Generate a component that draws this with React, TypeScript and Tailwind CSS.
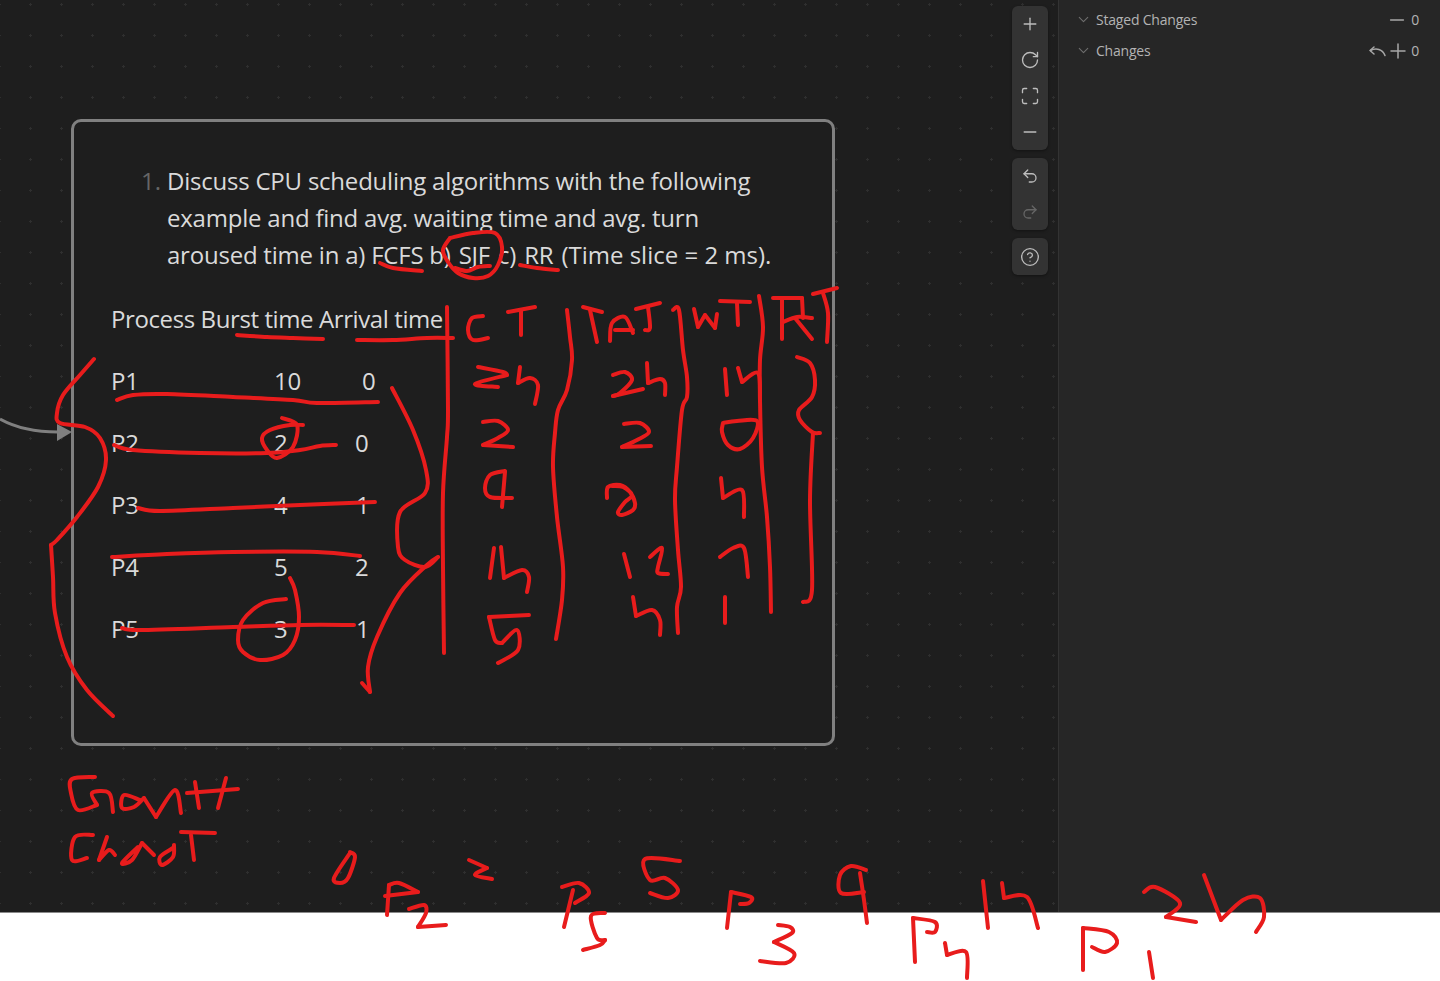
import { Plus, RotateCw, Maximize, Minus, Undo2, Redo2, CircleHelp, ChevronDown } from "lucide-react";

type Pt = [number, number];
const strokes: Pt[][] = [
  // question annotations
  [[380,263],[393,268],[422,271]],
  [[450,238],[473,233],[495,233],[502,247],[498,265],[488,276],[473,278],[458,273],[448,262],[443,250],[450,238]],
  [[455,268],[467,271],[478,267],[490,266]],
  [[520,265],[537,268],[558,270]],
  [[237,335],[267,337],[293,338],[323,339]],
  [[357,340],[393,340],[427,338],[453,338]],
  // column rules
  [[447,307],[448,410],[447,437],[443,493],[443,567],[444,653]],
  [[567,310],[570,337],[572,360],[567,390],[558,410],[555,433],[553,467],[557,517],[563,567],[562,600],[556,639]],
  [[673,310],[679,310],[683,350],[687,377],[687,397],[682,410],[677,467],[675,500],[678,550],[681,587],[677,607],[678,633]],
  [[759,296],[763,327],[760,360],[760,400],[762,467],[767,517],[770,567],[771,612]],
  // C T
  [[483,316],[472,318],[468,330],[473,340],[488,338]],
  [[508,312],[535,307]],
  [[521,310],[521,335]],
  // TAJ
  [[583,307],[602,312]],
  [[590,310],[597,342]],
  [[610,341],[612,323],[625,317],[633,333]],
  [[615,330],[633,330]],
  [[636,309],[660,303]],
  [[648,307],[650,328],[645,330]],
  // wT
  [[694,309],[698,327]],
  [[698,327],[705,315]],
  [[705,315],[715,328]],
  [[715,328],[717,314]],
  [[720,301],[750,302]],
  [[737,303],[738,325]],
  // RT
  [[773,298],[802,298]],
  [[782,300],[782,339]],
  [[802,298],[803,318]],
  [[783,322],[797,317],[812,318]],
  [[795,318],[812,339]],
  [[813,294],[837,288]],
  [[823,293],[828,313],[827,342]],
  // row 1
  [[478,367],[503,372],[507,375]],
  [[507,375],[475,384],[498,387]],
  [[520,367],[518,383]],
  [[518,383],[530,378],[538,385],[535,404]],
  [[613,375],[625,372],[632,380],[620,393],[613,396]],
  [[613,396],[643,389]],
  [[647,363],[648,383]],
  [[648,383],[660,379],[665,383],[665,395]],
  [[725,369],[727,395]],
  [[738,368],[742,382]],
  [[742,382],[758,373],[760,400]],
  [[797,357],[810,363],[815,380],[812,397],[799,410],[800,420],[812,432],[820,433]],
  [[813,433],[810,500],[812,590],[803,602]],
  // row 2
  [[483,422],[498,421],[508,430],[498,438],[483,445]],
  [[483,445],[513,447]],
  [[622,447],[651,446]],
  [[624,424],[640,423],[649,432],[637,440],[622,447]],
  [[723,423],[737,421],[757,421],[753,438],[740,449],[728,445],[722,432],[723,423]],
  // row 3
  [[505,471],[490,475],[485,488],[490,497],[512,498]],
  [[505,472],[502,507]],
  [[607,498],[608,487],[620,485],[630,492],[635,503],[633,510],[622,515],[618,512],[625,502],[632,495],[623,487],[612,486]],
  [[721,478],[723,498]],
  [[723,498],[742,490],[744,517]],
  // row 4
  [[494,548],[490,578]],
  [[501,547],[504,578]],
  [[504,578],[522,570],[529,577],[527,592]],
  [[624,554],[630,577]],
  [[650,557],[662,548],[658,567],[658,573],[668,574]],
  [[720,557],[733,548],[744,548],[748,577]],
  // row 5
  [[529,615],[489,617]],
  [[489,617],[495,640],[502,643]],
  [[502,643],[517,630],[518,650],[498,663]],
  [[633,597],[636,616]],
  [[636,616],[652,610],[660,620],[660,635]],
  [[725,597],[725,623]],
  // left side
  [[94,359],[80,375],[63,395],[57,413],[60,423],[85,427],[100,438],[106,460],[98,487],[77,517],[57,540],[51,545]],
  [[51,545],[53,577],[55,613],[67,657],[87,690],[113,716]],
  [[117,400],[133,395],[167,394],[233,397],[293,400],[317,403],[378,402]],
  [[114,445],[133,450],[200,453],[267,453],[300,450],[320,446],[336,445]],
  [[282,418],[297,425],[293,447],[277,458],[267,450],[262,438],[270,430],[290,425],[303,425]],
  [[138,508],[160,511],[233,508],[300,505],[375,502]],
  [[112,557],[167,554],[233,552],[317,552],[360,556]],
  [[122,628],[140,630],[233,627],[300,625],[354,625]],
  [[286,599],[263,603],[243,620],[238,640],[243,652],[260,660],[283,655],[295,640],[299,617],[295,590],[290,578]],
  [[392,388],[413,430],[426,470],[425,493],[400,512],[398,547],[405,560],[425,567],[438,557]],
  [[438,557],[427,565],[400,593],[377,637],[368,667],[370,692]],
  [[370,692],[362,683]],
  // Gantt
  [[95,777],[72,779],[71,793],[78,810],[97,805]],
  [[97,805],[92,793],[109,793],[113,812]],
  [[140,800],[124,795],[122,808],[134,807],[144,798]],
  [[144,798],[156,817]],
  [[156,817],[175,790],[181,813]],
  [[195,782],[199,808]],
  [[226,778],[218,808]],
  [[187,793],[238,789]],
  // Chart
  [[93,835],[75,837],[72,860],[87,858]],
  [[107,837],[99,860]],
  [[99,860],[109,850],[115,855]],
  [[138,847],[122,863],[132,860],[142,843]],
  [[142,843],[154,855]],
  [[173,848],[160,857],[162,865],[173,857],[174,845]],
  [[181,832],[215,833]],
  [[191,835],[194,860]],
  // timeline
  [[350,853],[334,878],[340,883],[348,878],[355,857],[350,852]],
  [[387,915],[389,885]],
  [[389,885],[399,883],[418,892]],
  [[418,892],[385,896]],
  [[409,909],[424,905],[426,913],[418,927]],
  [[418,927],[446,925]],
  [[469,860],[487,868]],
  [[487,868],[475,875],[492,879]],
  [[562,887],[579,883],[589,893],[575,903]],
  [[573,890],[564,927]],
  [[605,913],[591,916],[597,938],[605,940]],
  [[605,940],[600,945],[583,950]],
  [[680,861],[645,859],[650,880],[665,878],[678,890],[668,898],[650,893]],
  [[727,928],[731,892]],
  [[731,892],[751,897],[749,903],[740,904]],
  [[778,925],[790,927],[792,933],[774,942]],
  [[774,942],[794,953],[786,963],[760,961]],
  [[866,870],[851,866],[840,875],[841,893],[864,892]],
  [[860,873],[864,900],[867,923]],
  [[915,962],[913,918]],
  [[913,918],[935,922],[935,932],[927,932]],
  [[945,943],[947,955]],
  [[947,955],[966,952],[967,978]],
  [[983,881],[988,928]],
  [[1002,883],[1004,898]],
  [[1004,898],[1027,897],[1038,928]],
  [[1083,970],[1083,928]],
  [[1083,928],[1109,932],[1117,943],[1105,952],[1092,947]],
  [[1149,952],[1153,978]],
  [[1144,892],[1155,887],[1180,903],[1166,917]],
  [[1166,917],[1196,922]],
  [[1204,875],[1221,920]],
  [[1221,920],[1243,900],[1260,898],[1264,917],[1256,932]],
];

function toPath(p: Pt[]): string {
  let d = `M${p[0][0]} ${p[0][1]}`;
  for (let i = 0; i < p.length - 1; i++) {
    const a = p[Math.max(i - 1, 0)];
    const b = p[i];
    const c = p[i + 1];
    const e = p[Math.min(i + 2, p.length - 1)];
    d += `C${b[0] + (c[0] - a[0]) / 6} ${b[1] + (c[1] - a[1]) / 6} ${c[0] - (e[0] - b[0]) / 6} ${c[1] - (e[1] - b[1]) / 6} ${c[0]} ${c[1]}`;
  }
  return d;
}

const rows: { name: string; burst: string; arrive: string; col: string }[] = [
  { name: "P1", burst: "10", arrive: "0", col: "w-[88px]" },
  { name: "P2", burst: "2", arrive: "0", col: "w-[81px]" },
  { name: "P3", burst: "4", arrive: "1", col: "w-[82px]" },
  { name: "P4", burst: "5", arrive: "2", col: "w-[81px]" },
  { name: "P5", burst: "3", arrive: "1", col: "w-[82px]" },
];

function Ctl({ children }: { children: React.ReactNode }) {
  return <div className="flex h-9 w-9 items-center justify-center">{children}</div>;
}

function Group({ children }: { children: React.ReactNode }) {
  return (
    <div className="flex flex-col rounded-md bg-[#333333] shadow-[0_1px_3px_rgba(0,0,0,0.4)] text-[#bdbdbd]">
      {children}
    </div>
  );
}

function SideRow({ label, children }: { label: string; children: React.ReactNode }) {
  return (
    <div className="flex h-[31px] items-center pl-[16px] pr-[21px] text-[14px] tracking-[-0.2px] text-[#b3b3b3]">
      <ChevronDown size={17} strokeWidth={1.5} className="text-[#6e6e6e]" />
      <span className="ml-[4px] flex-1">{label}</span>
      {children}
    </div>
  );
}

export default function App() {
  return (
    <div className="relative h-[981px] w-[1440px] overflow-hidden bg-white font-['Open_Sans','Noto_Sans',sans-serif]">
      <div className="flex h-[913px] border-b border-[#8a8a8a]">
        <main className="relative flex-1 bg-[#1e1e1e] bg-[radial-gradient(circle,#2f2f2f_1px,transparent_1.2px)] bg-[length:31px_31px] bg-[position:15px_-11px]">
          <svg className="absolute left-0 top-[410px] h-[40px] w-[80px]" viewBox="0 0 80 40" fill="none">
            <path d="M0 9C18 19 36 22 58 22" stroke="#808080" strokeWidth="3" />
            <path d="M57 14L72 22L57 31Z" fill="#808080" />
          </svg>
          <section className="absolute left-[71px] top-[119px] h-[627px] w-[764px] rounded-[10px] border-[3px] border-[#808080] bg-[#1e1e1e] pl-[37px] pt-[40px] text-[24px] leading-[37px] text-[#dadada]">
            <div className="flex">
              <span className="w-[56px] pl-[30px] text-[#666666]">1.</span>
              <p className="w-[650px] tracking-[-0.22px]">
                <span className="block whitespace-nowrap">Discuss CPU scheduling algorithms with the following</span>
                <span className="block whitespace-nowrap">example and find avg. waiting time and avg. turn</span>
                <span className="block whitespace-nowrap">
                  aroused time in a) FCFS <span className="[word-spacing:2px]">b) SJF c) RR </span>
                  <span className="tracking-normal">(Time slice = 2 ms).</span>
                </span>
              </p>
            </div>
            <p className="mt-[27px] tracking-[-0.4px]">Process Burst time Arrival time</p>
            <div className="mt-[25px] flex flex-col gap-[25px] tracking-[-0.25px]">
              {rows.map((r) => (
                <div key={r.name} className="flex">
                  <span className="w-[163px]">{r.name}</span>
                  <span className={r.col}>{r.burst}</span>
                  <span>{r.arrive}</span>
                </div>
              ))}
            </div>
          </section>
          <div className="absolute left-[1012px] top-[6px] flex flex-col gap-2">
            <Group>
              <Ctl><Plus size={20} strokeWidth={1.6} /></Ctl>
              <Ctl><RotateCw size={20} strokeWidth={1.6} /></Ctl>
              <Ctl><Maximize size={20} strokeWidth={1.6} /></Ctl>
              <Ctl><Minus size={20} strokeWidth={1.6} /></Ctl>
            </Group>
            <Group>
              <Ctl><Undo2 size={18} strokeWidth={1.7} /></Ctl>
              <Ctl><Redo2 size={18} strokeWidth={1.7} className="text-[#666666]" /></Ctl>
            </Group>
            <Group>
              <div className="flex h-[37px] w-9 items-center justify-center"><CircleHelp size={20} strokeWidth={1.6} /></div>
            </Group>
          </div>
        </main>
        <aside className="w-[382px] border-l border-[#333333] bg-[#262626] pt-[4px]">
          <SideRow label="Staged Changes">
            <Minus size={22} strokeWidth={1.5} className="mr-[3px] text-[#a8a8a8]" />
            <span>0</span>
          </SideRow>
          <SideRow label="Changes">
            <svg width="18" height="14" viewBox="0 0 18 14" fill="none" stroke="#a8a8a8" strokeWidth="1.5" strokeLinecap="round" strokeLinejoin="round">
              <path d="M6 3L2 6.5L6 10" />
              <path d="M2.5 6.5C8 3.5 14.5 5 17 11.5" />
            </svg>
            <Plus size={24} strokeWidth={1.5} className="mr-[1px] text-[#a8a8a8]" />
            <span>0</span>
          </SideRow>
        </aside>
      </div>
      <svg className="pointer-events-none absolute inset-0 h-[981px] w-[1440px]" viewBox="0 0 1440 981" fill="none">
        {strokes.map((p, i) => (
          <path key={i} d={toPath(p)} stroke="#e81c1c" strokeWidth="4" strokeLinecap="round" strokeLinejoin="round" />
        ))}
      </svg>
    </div>
  );
}
